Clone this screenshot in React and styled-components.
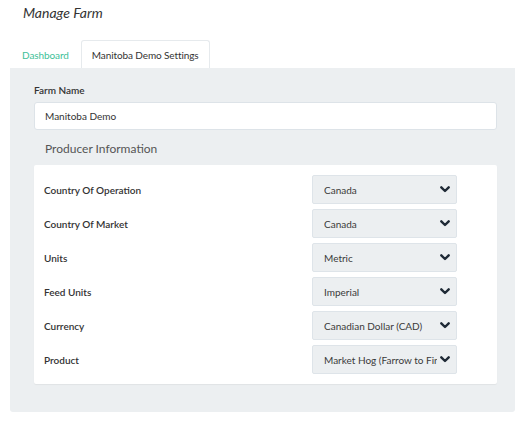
import React from 'react';
import styled, { createGlobalStyle } from 'styled-components';

const GlobalStyle = createGlobalStyle`
  body {
    margin: 0;
    background: #fff;
    font-family: Lato, "Open Sans", sans-serif;
    color: #333;
  }
`

const Page = styled.div`
  width: 529px;
  padding-right: 14px;
  box-sizing: border-box;
`

const Title = styled.h1`
  margin: 0;
  padding: 5px 0 0 23px;
  height: 36px;
  box-sizing: border-box;
  font-size: 14px;
  font-weight: 400;
  font-style: italic;
  line-height: 16px;
  color: #333;
`

const Tabs = styled.div`
  display: flex;
  padding-left: 10px;
  margin-top: 4px;
`

const Tab = styled.div`
  height: 28px;
  box-sizing: border-box;
  padding: 0 ${props => props.active ? '10px' : '11px'};
  display: flex;
  align-items: center;
  font-size: 10px;
  letter-spacing: -0.1px;
  color: ${props => props.active ? '#333' : '#3dbf98'};
  background: ${props => props.active ? '#fff' : 'transparent'};
  border: 1px solid ${props => props.active ? '#e6eaed' : 'transparent'};
  border-bottom: none;
  border-radius: 3px 3px 0 0;
`

const Panel = styled.div`
  margin-left: 10px;
  background: #eceff1;
  padding: 16px 18px 28px 24px;
  border-radius: 0 0 3px 3px;
`

const Label = styled.div`
  font-size: 10px;
  font-weight: 600;
  line-height: 12px;
  color: #333;
`

const TextInput = styled.div`
  margin-top: 6px;
  height: 28px;
  box-sizing: border-box;
  background: #fff;
  border: 1px solid #dde3e8;
  border-radius: 3px;
  padding: 0 10px;
  display: flex;
  align-items: center;
  font-size: 10px;
  color: #333;
`

const SectionTitle = styled.div`
  padding: 11px 11px 0;
  height: 35px;
  box-sizing: border-box;
  font-size: 12px;
  color: #555;
`

const Card = styled.div`
  background: #fff;
  padding: 10px 40px 10px 10px;
  display: flex;
  flex-direction: column;
  gap: 5px;
  border-radius: 2px;
  box-shadow: 0 1px 1px rgba(0, 0, 0, 0.05);
`

const Row = styled.div`
  display: flex;
  justify-content: space-between;
  align-items: center;
`

const RowLabel = styled.div`
  font-size: 10px;
  font-weight: 600;
  color: #333;
`

const Select = styled.div`
  width: 145px;
  height: 29px;
  box-sizing: border-box;
  background: #eceff1;
  border: 1px solid #dee4e9;
  border-radius: 2px;
  padding: 0 6px 0 11px;
  display: flex;
  align-items: center;
  justify-content: space-between;
  font-size: 10px;
  color: #3a3a3a;
`

const SelectText = styled.span`
  white-space: nowrap;
  overflow: hidden;
  flex: 1;
`

const ChevronIcon = styled.svg`
  flex-shrink: 0;
  width: 10px;
  height: 7px;
  margin-left: 3px;
`

const Chevron = () => (
  <ChevronIcon viewBox="0 0 10 7">
    <polyline points="1.3,1.3 5,5 8.7,1.3" fill="none" stroke="#1f2a36" strokeWidth="2.4" strokeLinecap="round" strokeLinejoin="round" />
  </ChevronIcon>
);

const rows = [
  ['Country Of Operation', 'Canada'],
  ['Country Of Market', 'Canada'],
  ['Units', 'Metric'],
  ['Feed Units', 'Imperial'],
  ['Currency', 'Canadian Dollar (CAD)'],
  ['Product', 'Market Hog (Farrow to Finish)'],
];

const App = () => {
  return (
    <Page>
      <GlobalStyle />
      <Title>Manage Farm</Title>
      <Tabs>
        <Tab>Dashboard</Tab>
        <Tab active>Manitoba Demo Settings</Tab>
      </Tabs>
      <Panel>
        <Label>Farm Name</Label>
        <TextInput>Manitoba Demo</TextInput>
        <SectionTitle>Producer Information</SectionTitle>
        <Card>
          {rows.map(([label, value]) => (
            <Row key={label}>
              <RowLabel>{label}</RowLabel>
              <Select>
                <SelectText>{value}</SelectText>
                <Chevron />
              </Select>
            </Row>
          ))}
        </Card>
      </Panel>
    </Page>
  );
}

export default App;
